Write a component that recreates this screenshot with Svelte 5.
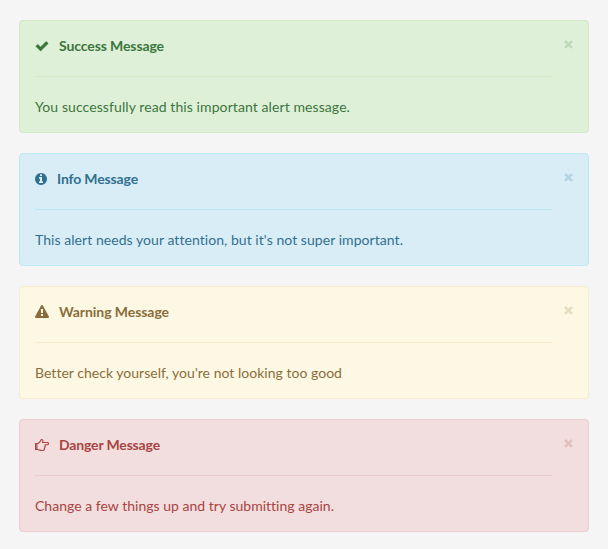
<script>
  const alerts = [
    { type: 'success', title: 'Success Message', text: 'You successfully read this important alert message.', w: 14, tw: 105, pw: 315, vb: '0 0 1792 1792', d: 'M1671 566q0 40-28 68l-724 724-136 136q-28 28-68 28t-68-28l-136-136-362-362q-28-28-28-68t28-68l136-136q28-28 68-28t68 28l294 295 656-657q28-28 68-28t68 28l136 136q28 28 28 68z' },
    { type: 'info', title: 'Info Message', text: "This alert needs your attention, but it's not super important.", w: 12, tw: 81, pw: 368, vb: '128 0 1536 1792', d: 'M1152 1376v-160q0-14-9-23t-23-9h-96v-512q0-14-9-23t-23-9h-320q-14 0-23 9t-9 23v160q0 14 9 23t23 9h96v320h-96q-14 0-23 9t-9 23v160q0 14 9 23t23 9h448q14 0 23-9t9-23zm-128-896v-160q0-14-9-23t-23-9h-192q-14 0-23 9t-9 23v160q0 14 9 23t23 9h192q14 0 23-9t9-23zm640 416q0 209-103 385.500t-279.500 279.500-385.500 103-385.500-103-279.500-279.500-103-385.500 103-385.500 279.500-279.500 385.500-103 385.500 103 279.500 279.500 103 385.500z' },
    { type: 'warning', title: 'Warning Message', text: "Better check yourself, you're not looking too good", w: 14, tw: 110, pw: 307, vb: '0 0 1792 1792', d: 'M1024 1375v-190q0-14-9.500-23.500t-22.500-9.500h-192q-13 0-22.500 9.500t-9.500 23.500v190q0 14 9.500 23.500t22.500 9.500h192q13 0 22.500-9.500t9.500-23.500zm-2-374l18-459q0-12-10-19-13-11-24-11h-220q-11 0-24 11-10 7-10 21l17 457q0 10 10 16.500t24 6.500h185q14 0 23.500-6.500t10.500-16.500zm-14-934l768 1408q35 63-2 126-17 29-46.500 46t-63.500 17h-1536q-34 0-63.500-17t-46.500-46q-37-63-2-126l768-1408q17-31 47-49t65-18 65 18 47 49z' },
    { type: 'danger', title: 'Danger Message', text: 'Change a few things up and try submitting again.', w: 14, tw: 101, pw: 299, vb: '0 0 14 14' },
  ];
  let closed = $state([]);

  // Sets the tracking so that a line of text fills the given measure.
  function measure(node, width) {
    const n = node.textContent.length;
    const fit = () => {
      node.style.letterSpacing = '0px';
      node.style.letterSpacing = (width - node.getBoundingClientRect().width) / n + 'px';
    };
    fit();
    document.fonts?.ready.then(fit);
  }
</script>

<main>
  {#each alerts as a}
    {#if !closed.includes(a.type)}
      <section class="alert {a.type}" role="alert">
        <button aria-label="Close" onclick={() => closed.push(a.type)}>
          <svg width="9" height="9" viewBox="0 0 9 9"><path d="M1 1 8 7.800M8 1 1 7.800" /></svg>
        </button>
        <h4>
          <svg width={a.w} height="14" viewBox={a.vb} aria-hidden="true">
            {#if a.d}
              <path class={a.type === 'success' ? 'check' : ''} d={a.d} />
            {:else}
              <path class="cuff" d="M.5 5.500H2.700V11.500H.5Z" />
              <path class="hand" d="M.5 5.500H3C4.500 4.500 5.500 3.500 5.700 2.700 5.800 1.900 6 1.500 6.500 1.500 7.700 1.500 8 2.100 8 2.800 8 3.400 7.500 3.900 7.500 4.500H12.200C13 4.500 13.500 4.900 13.500 5.600S13 6.700 12.200 6.700H10C10.500 7.500 10.300 8.200 9.800 8.600 10.100 9.300 9.900 9.900 9.400 10.200 9.600 11.500 9 12.500 7.500 12.500H6.500C5 12.500 4 11.500 2.700 11.500H.5Z" />
            {/if}
          </svg>
          <span use:measure={a.tw}>{a.title}</span>
        </h4>
        <hr />
        <p><span use:measure={a.pw}>{a.text}</span></p>
      </section>
    {/if}
  {/each}
</main>

<style>
  :global(body) { margin: 0; background: #f5f5f5; }
  main {
    box-sizing: border-box;
    height: 549px;
    padding: 20px 19px 0;
    display: flex;
    flex-direction: column;
    gap: 20px;
    font: 14px/20px Lato, sans-serif;
    font-variant-ligatures: none;
    white-space: nowrap;
  }
  .alert {
    position: relative;
    box-sizing: border-box;
    height: 113px;
    padding: 15px 36px 15px 15px;
    border: 1px solid;
    border-radius: 4px;
  }
  h4 { display: flex; align-items: center; gap: 10px; height: 20px; margin: 0; font-size: 14px; font-weight: 700; }
  h4 svg { fill: currentColor; flex: none; }
  .check { stroke: currentColor; stroke-width: 45; }
  .hand { fill: none; stroke: currentColor; stroke-width: 1.150; stroke-linejoin: round; }
  .cuff { fill: currentColor; opacity: 0.7; }
  hr { height: 0; margin: 20px 0; border: 0; border-top: 1px solid; }
  p { margin: 0; }
  button {
    position: absolute;
    top: 19px;
    right: 15px;
    display: flex;
    padding: 0;
    border: 0;
    background: none;
    cursor: pointer;
  }
  button path { fill: none; stroke: currentColor; stroke-width: 2.500; }
  .success { background: #dff0d8; border-color: #d0e9c6; color: #3c763d; }
  .success hr { border-color: #d3eac8; }
  .success button { color: #bfd9ba; }
  .info { background: #d9edf7; border-color: #bce8f1; color: #31708f; }
  .info hr { border-color: #bce8f1; }
  .info button { color: #b7d4e2; }
  .warning { background: #fcf8e3; border-color: #faebcc; color: #8a6d3b; }
  .warning hr { border-color: #faebcc; }
  .warning button { color: #e5dcc2; }
  .danger { background: #f2dede; border-color: #ebccd1; color: #a94442; }
  .danger hr { border-color: #ebccd1; }
  .danger button { color: #e3bfbf; }
</style>
